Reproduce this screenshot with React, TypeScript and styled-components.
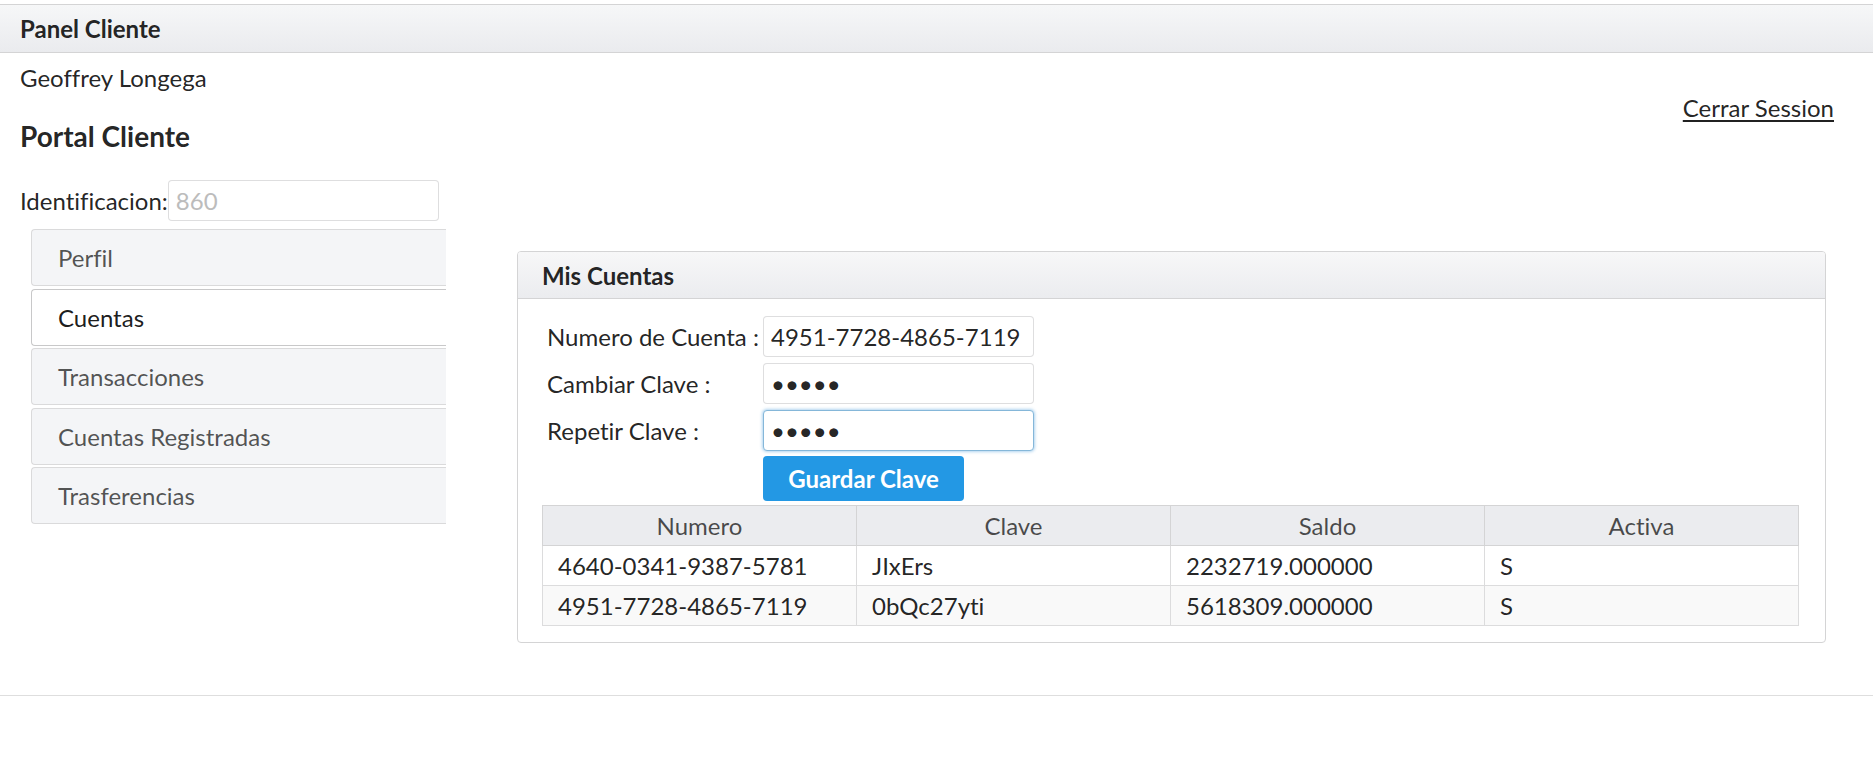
import React from "react";
import styled, { createGlobalStyle } from "styled-components";

const GlobalStyle = createGlobalStyle`
  html, body { margin: 0; padding: 0; background: #fff; }
  body {
    font-family: Lato, "Open Sans", "Liberation Sans", sans-serif;
    color: rgba(0,0,0,0.87);
    font-size: 24px;
    font-variant-ligatures: none;
  }
  * { box-sizing: border-box; }
  input, button { font-variant-ligatures: none; }
`;

const Page = styled.div`
  width: 1873px;
  padding-top: 4px;
`;

const TopBar = styled.div`
  height: 49px;
  border-top: 1px solid #d4d4d5;
  border-bottom: 1px solid #d4d4d5;
  background: linear-gradient(#f6f7f8, #eaebee);
  padding-left: 20px;
  display: flex;
  align-items: center;
`;

const BarTitle = styled.h2`
  margin: 0;
  font-size: 24px;
  font-weight: 700;
  line-height: 30px;
  color: rgba(0,0,0,0.87);
`;

const Main = styled.div`
  padding: 0 39px 0 20px;
`;

const TopRow = styled.div`
  display: flex;
  justify-content: space-between;
  align-items: flex-start;
  padding-top: 10px;
`;

const Identity = styled.div`
  display: flex;
  flex-direction: column;
`;

const Name = styled.div`
  font-size: 24px;
  line-height: 30px;
`;

const Title = styled.h3`
  margin: 27px 0 0;
  font-size: 28px;
  line-height: 32px;
  font-weight: 700;
`;

const IdRow = styled.div`
  display: flex;
  align-items: center;
  margin-top: 28px;
`;

const IdLabel = styled.span`
  font-size: 24px;
  line-height: 30px;
`;

const TextInput = styled.input<{ $width: number; $focused?: boolean }>`
  width: ${(p) => p.$width}px;
  height: 41px;
  border: 1px solid ${(p) => (p.$focused ? "#85b7d9" : "rgba(34,36,38,0.15)")};
  border-radius: 4px;
  padding: 0 7px;
  font-family: inherit;
  font-size: 24px;
  color: rgba(0,0,0,0.87);
  background: #fff;
  outline: none;
  box-shadow: ${(p) => (p.$focused ? "0 0 3px 1px rgba(80,160,220,0.45)" : "none")};
  &::placeholder { color: #bcbcbc; }
`;

const Logout = styled.a`
  margin-top: 30px;
  font-size: 24px;
  line-height: 30px;
  color: rgba(0,0,0,0.87);
  text-decoration: underline;
  text-underline-offset: 3px;
  cursor: pointer;
`;

const Body = styled.div`
  display: flex;
  align-items: flex-start;
  margin-top: 8px;
`;

const Menu = styled.div`
  display: flex;
  flex-direction: column;
  gap: 2.5px;
  width: 415px;
  margin-left: 11px;
`;

const MenuItem = styled.div<{ $active?: boolean }>`
  height: 57px;
  display: flex;
  align-items: center;
  padding-left: 26px;
  border: 1px solid ${(p) => (p.$active ? "#c8c8c9" : "#dadadb")};
  border-right: none;
  border-radius: 4px 0 0 4px;
  background: ${(p) => (p.$active ? "#fff" : "#f4f5f7")};
  color: ${(p) => (p.$active ? "rgba(0,0,0,0.9)" : "rgba(0,0,0,0.68)")};
  font-size: 24px;
`;

const Panel = styled.div`
  margin-left: 71px;
  margin-top: 22px;
  width: 1309px;
  border: 1px solid #d4d4d5;
  border-radius: 4px;
  overflow: hidden;
`;

const PanelHeader = styled.div`
  height: 47px;
  background: linear-gradient(#f7f7f8, #ebecef);
  border-bottom: 1px solid #d4d4d5;
  padding-left: 24px;
  display: flex;
  align-items: center;
  font-weight: 700;
  font-size: 24px;
`;

const PanelBody = styled.div`
  padding: 17px 26px 16px 24px;
`;

const Form = styled.div`
  display: grid;
  grid-template-columns: 216px 271px;
  row-gap: 6px;
  padding-left: 5px;
  align-items: center;
`;

const FieldLabel = styled.label`
  font-size: 24px;
  line-height: 30px;
`;

const SaveButton = styled.button`
  grid-column: 2;
  width: 201px;
  height: 45px;
  margin-top: -1px;
  border: none;
  border-radius: 4px;
  background: #2398e4;
  color: #fff;
  font-family: inherit;
  font-weight: 700;
  font-size: 24px;
  cursor: pointer;
`;

const Table = styled.table`
  margin-top: 4px;
  width: 1257px;
  border-collapse: collapse;
  table-layout: fixed;
  font-size: 24px;
`;

const Th = styled.th`
  height: 40px;
  background: #ebecef;
  border: 1px solid #d4d4d5;
  font-weight: 400;
  color: rgba(0,0,0,0.7);
  text-align: center;
  padding: 0;
`;

const Tr = styled.tr<{ $alt?: boolean }>`
  background: ${(p) => (p.$alt ? "#f9f9f9" : "#fff")};
`;

const Td = styled.td`
  height: 40px;
  border: 1px solid #dcdcdd;
  padding: 0 15px;
`;

const Footer = styled.div`
  margin-top: 52px;
  border-top: 1px solid #dedede;
  height: 60px;
`;

const menuItems = ["Perfil", "Cuentas", "Transacciones", "Cuentas Registradas", "Trasferencias"];

const rows = [
  { numero: "4640-0341-9387-5781", clave: "JIxErs", saldo: "2232719.000000", activa: "S" },
  { numero: "4951-7728-4865-7119", clave: "0bQc27yti", saldo: "5618309.000000", activa: "S" },
];

export default function App() {
  return (
    <Page>
      <GlobalStyle />
      <TopBar>
        <BarTitle>Panel Cliente</BarTitle>
      </TopBar>
      <Main>
        <TopRow>
          <Identity>
            <Name>Geoffrey Longega</Name>
            <Title>Portal Cliente</Title>
            <IdRow>
              <IdLabel>Identificacion:</IdLabel>
              <TextInput $width={271} placeholder="860" readOnly />
            </IdRow>
          </Identity>
          <Logout>Cerrar Session</Logout>
        </TopRow>
        <Body>
          <Menu>
            {menuItems.map((m) => (
              <MenuItem key={m} $active={m === "Cuentas"}>
                {m}
              </MenuItem>
            ))}
          </Menu>
          <Panel>
            <PanelHeader>Mis Cuentas</PanelHeader>
            <PanelBody>
              <Form>
                <FieldLabel>Numero de Cuenta :</FieldLabel>
                <TextInput $width={271} defaultValue="4951-7728-4865-7119" readOnly />
                <FieldLabel>Cambiar Clave :</FieldLabel>
                <TextInput $width={271} type="password" defaultValue="abcde" readOnly />
                <FieldLabel>Repetir Clave :</FieldLabel>
                <TextInput $width={271} $focused type="password" defaultValue="abcde" />
                <SaveButton>Guardar Clave</SaveButton>
              </Form>
              <Table>
                <thead>
                  <tr>
                    <Th>Numero</Th>
                    <Th>Clave</Th>
                    <Th>Saldo</Th>
                    <Th>Activa</Th>
                  </tr>
                </thead>
                <tbody>
                  {rows.map((r, i) => (
                    <Tr key={r.numero} $alt={i === 1}>
                      <Td>{r.numero}</Td>
                      <Td>{r.clave}</Td>
                      <Td>{r.saldo}</Td>
                      <Td>{r.activa}</Td>
                    </Tr>
                  ))}
                </tbody>
              </Table>
            </PanelBody>
          </Panel>
        </Body>
      </Main>
      <Footer />
    </Page>
  );
}
